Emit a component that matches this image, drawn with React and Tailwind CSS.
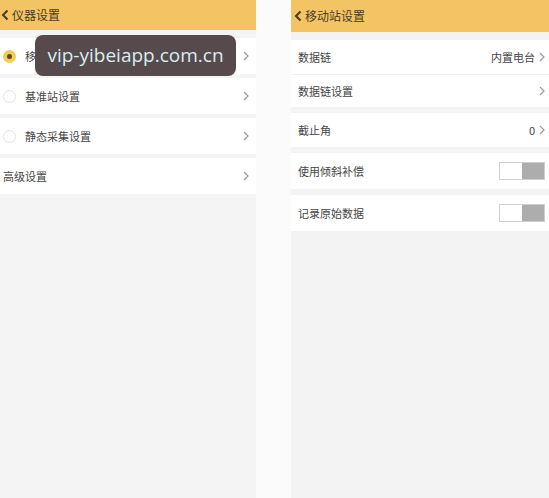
import React from 'react';

const font = { fontFamily: '"Noto Sans CJK SC", "Noto Sans", sans-serif' };

const Chevron = ({ className = '' }) => (
  <svg width="6" height="10" viewBox="0 0 6 10" className={className}>
    <path d="M1 1 L5 5 L1 9" fill="none" stroke="#9a9a9a" strokeWidth="1.2" />
  </svg>
);

const Back = () => (
  <svg width="8" height="12" viewBox="0 0 8 12">
    <path d="M6.5 1.5 L2 6 L6.5 10.5" fill="none" stroke="#4a3a20" strokeWidth="2" />
  </svg>
);

const Radio = ({ on }) => (
  <div
    className={[
      'w-[13px] h-[13px] rounded-full flex items-center justify-center shrink-0',
      on ? 'bg-[#f2cc55]' : 'bg-white border border-[#e2e2e2]',
    ].join(' ')}
  >
    {on && <div className="w-[5px] h-[5px] rounded-full bg-[#5a4a20]" />}
  </div>
);

const Toggle = () => (
  <div className="flex w-[46px] h-[18px] border border-[#cfcfcf] bg-white">
    <div className="flex-1" />
    <div className="w-[22px] bg-[#adadad]" />
  </div>
);

const leftRows = [
  { label: '移动站设置', radio: true, on: true },
  { label: '基准站设置', radio: true },
  { label: '静态采集设置', radio: true },
  { label: '高级设置' },
];

export default function App() {
  return (
    <div className="relative w-[549px] h-[498px] bg-[#fbfbfb] flex overflow-hidden text-[#454545]" style={font}>
      {/* left screen */}
      <div className="w-[256px] h-full bg-[#f4f4f4] flex flex-col">
        <div className="h-[30px] bg-[#f2c464] flex items-center gap-[3px] pl-[1px]">
          <Back />
          <span className="text-[12px] text-[#4a3a20]">仪器设置</span>
        </div>
        <div className="mt-[8px] flex flex-col gap-[4px]">
          {leftRows.map((r) => (
            <div key={r.label} className="h-[36px] bg-white flex items-center pr-[7px]">
              {r.radio ? (
                <div className="flex items-center gap-[9px] pl-[3px] flex-1">
                  <Radio on={r.on} />
                  <span className="text-[11px]">{r.label}</span>
                </div>
              ) : (
                <span className="text-[11px] pl-[3px] flex-1">{r.label}</span>
              )}
              <Chevron />
            </div>
          ))}
        </div>
      </div>

      {/* right screen */}
      <div className="ml-[35px] flex-1 h-full bg-[#f3f3f3] flex flex-col">
        <div className="h-[32px] bg-[#f2c464] flex items-center gap-[3px] pl-[3px]">
          <Back />
          <span className="text-[12px] text-[#4a3a20]">移动站设置</span>
        </div>
        <div className="mt-[8px] flex flex-col">
          <div className="h-[34px] bg-white flex items-center justify-between pl-[7px] pr-[4px]">
            <span className="text-[11px]">数据链</span>
            <div className="flex items-center gap-[4px]">
              <span className="text-[11px]">内置电台</span>
              <Chevron />
            </div>
          </div>
          <div className="h-[33px] bg-white border-t border-[#eeeeee] flex items-center justify-between pl-[7px] pr-[4px]">
            <span className="text-[11px]">数据链设置</span>
            <Chevron />
          </div>
          <div className="mt-[6px] h-[34px] bg-white flex items-center justify-between pl-[7px] pr-[4px]">
            <span className="text-[11px]">截止角</span>
            <div className="flex items-center gap-[4px]">
              <span className="text-[11px]">0</span>
              <Chevron />
            </div>
          </div>
          <div className="mt-[6px] h-[36px] bg-white flex items-center justify-between pl-[7px] pr-[4px]">
            <span className="text-[11px]">使用倾斜补偿</span>
            <Toggle />
          </div>
          <div className="mt-[6px] h-[36px] bg-white flex items-center justify-between pl-[7px] pr-[4px]">
            <span className="text-[11px]">记录原始数据</span>
            <Toggle />
          </div>
        </div>
      </div>

      {/* watermark */}
      <div
        className="absolute left-[35px] top-[35px] w-[201px] h-[41px] rounded-[8px] bg-[#564a4d] flex items-center justify-center text-[19px] text-[#d8eef0]"
        style={{ fontFamily: '"Open Sans", "Noto Sans", sans-serif' }}
      >
        vip-yibeiapp.com.cn
      </div>
    </div>
  );
}
